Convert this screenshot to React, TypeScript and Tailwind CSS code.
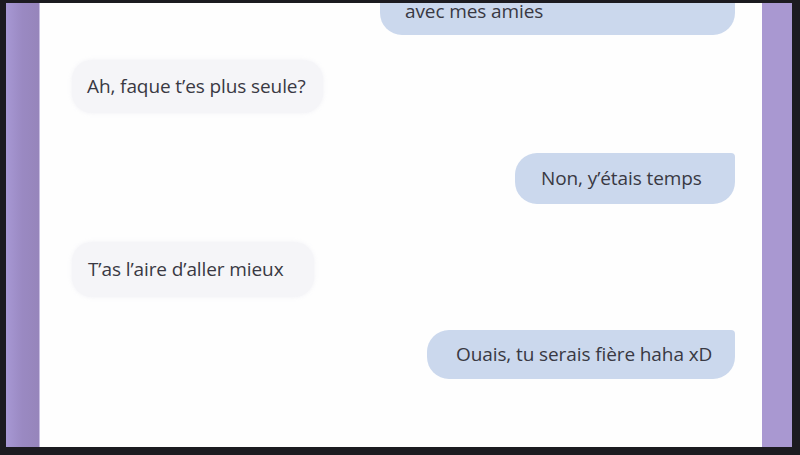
import React from "react";

type Msg = {
  text: string;
  mine: boolean;
  box: string;
};

const messages: Msg[] = [
  { text: "avec mes amies", mine: true, box: "-mt-[20px] h-[52px] w-[355px] pl-[25px] items-end pb-[14px]" },
  { text: "Ah, faque t\u2019es plus seule?", mine: false, box: "mt-[25px] h-[53px] w-[251px] pl-[15px]" },
  { text: "Non, y\u2019\u00e9tais temps", mine: true, box: "mt-[40px] h-[51px] w-[220px] pl-[26px]" },
  { text: "T\u2019as l\u2019aire d\u2019aller mieux", mine: false, box: "mt-[38px] h-[55px] w-[242px] pl-[16px]" },
  { text: "Ouais, tu serais fi\u00e8re haha xD", mine: true, box: "mt-[33px] h-[49px] w-[308px] pl-[29px]" },
];

const Bubble: React.FC<{ msg: Msg }> = ({ msg }) => (
  <div className={`flex ${msg.mine ? "justify-end" : "justify-start"}`}>
    <div
      className={`flex shrink-0 items-center ${msg.box} ${
        msg.mine
          ? "rounded-[22px] rounded-tr-[4px] bg-[#cbd8ed]"
          : "rounded-[20px] bg-[#f5f5f8] shadow-[0_0_4px_rgba(238,238,244,0.8)]"
      }`}
    >
      <span className="whitespace-nowrap text-[19px] leading-none tracking-[-0.1px] text-[#393943]">
        {msg.text}
      </span>
    </div>
  </div>
);

export default function App() {
  return (
    <div
      className="flex h-[455px] w-[800px] bg-[#1c1b20] pb-[8px] pl-[6px] pr-[8px] pt-[3px]"
      style={{ fontFamily: '"Open Sans", "Noto Sans", sans-serif' }}
    >
      <div className="w-[34px] shrink-0 bg-gradient-to-r from-[#a798d4] via-[#9a89c2] to-[#9685bb] border-r border-[#c9bfe3]" />
      <div className="flex flex-1 flex-col overflow-hidden bg-[#fefefe] pl-[32px] pr-[27px]">
        {messages.map((m, i) => (
          <Bubble key={i} msg={m} />
        ))}
      </div>
      <div className="w-[30px] shrink-0 bg-[#a998d1]" />
    </div>
  );
}
